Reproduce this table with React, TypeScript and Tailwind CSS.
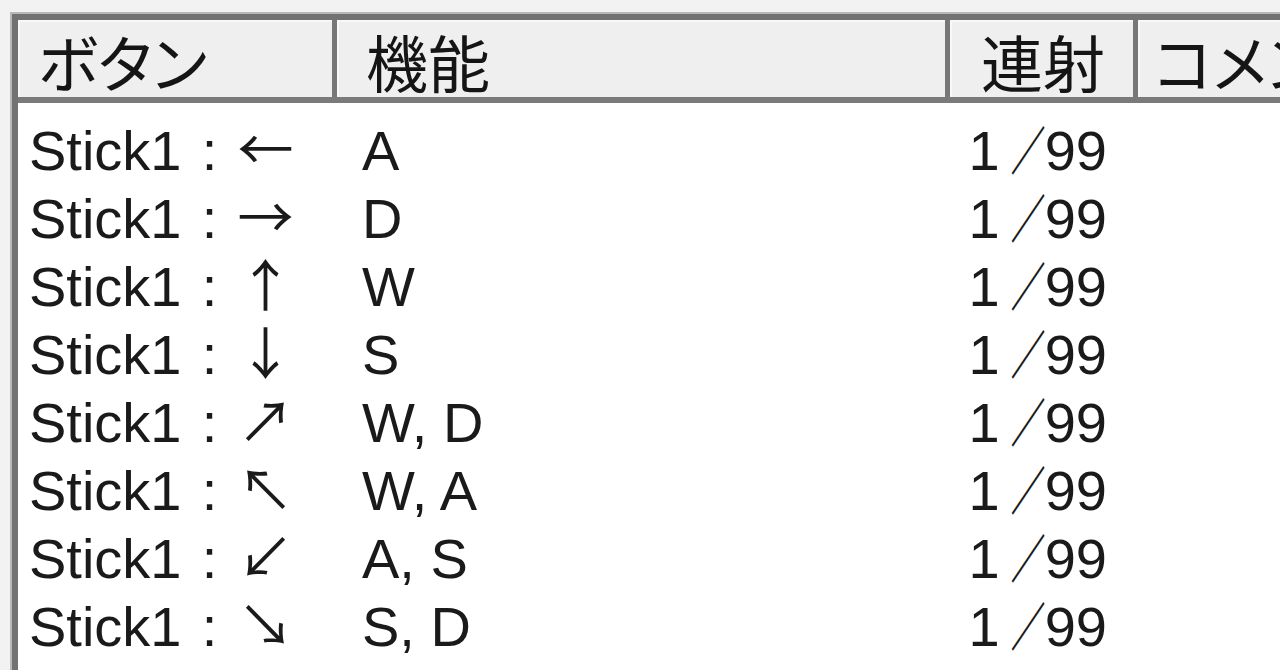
import React from 'react';

const rows = [
  { dir: '←', fn: 'A' },
  { dir: '→', fn: 'D' },
  { dir: '↑', fn: 'W' },
  { dir: '↓', fn: 'S' },
  { dir: '↗', fn: 'W, D' },
  { dir: '↖', fn: 'W, A' },
  { dir: '↙', fn: 'A, S' },
  { dir: '↘', fn: 'S, D' },
];

const latin = "font-['Liberation_Sans','Noto_Sans_CJK_JP',sans-serif]";
const cjk = "font-['Noto_Sans_CJK_JP',sans-serif]";

function HeaderCell({ children, className = '' }: { children?: React.ReactNode; className?: string }) {
  return (
    <div className={`h-full bg-[#efefef] border-l-2 border-t-2 border-[#f8f8f8] flex items-center whitespace-nowrap ${className}`}>
      {children}
    </div>
  );
}

function Sep() {
  return <div className="h-full bg-[#777777]" />;
}

function App() {
  return (
    <div className="w-[1280px] h-[670px] overflow-hidden bg-[#f2f2f2] pt-[12px] pl-[10px]">
      <div className="h-full border-l-2 border-t-2 border-[#b8b8b8]">
        <div className="h-full border-l-[6px] border-t-[6px] border-[#727272] bg-white">
          {/* header */}
          <div
            className={`h-[83px] border-b-[6px] border-[#7a7a7a] grid grid-cols-[314px_5px_608px_5px_183px_5px_1fr] text-[62px] leading-none text-[#151515] ${cjk} [font-feature-settings:'palt']`}
          >
            <HeaderCell className="pl-[18px] pt-[2px]">ボタン</HeaderCell>
            <Sep />
            <HeaderCell className="pl-[27px] pt-[2px]">機能</HeaderCell>
            <Sep />
            <HeaderCell className="justify-end pr-[28px] pt-[2px]">連射</HeaderCell>
            <Sep />
            <HeaderCell className="pl-[14px] pt-[2px] overflow-hidden">コメント</HeaderCell>
          </div>

          {/* body */}
          <div className={`pt-[14px] text-[56px] leading-[68px] text-[#1a1a1a] ${latin}`}>
            {rows.map((r, i) => (
              <div key={i} className="grid grid-cols-[319px_613px_188px_1fr] h-[68px] whitespace-nowrap">
                <div className="pl-[11px]">
                  Stick1
                  <span className="inline-block w-[56px] text-center">:</span>
                  <span className={`${cjk} leading-none`}>{r.dir}</span>
                </div>
                <div className="pl-[25px]">{r.fn}</div>
                <div className="text-right pr-[31px]">
                  1
                  <span className="inline-block w-[45px] text-center">
                    <span className={`${cjk} font-bold leading-none inline-block scale-x-[0.62] scale-y-[0.92] translate-y-[2px]`}>／</span>
                  </span>
                  99
                </div>
                <div />
              </div>
            ))}
          </div>
        </div>
      </div>
    </div>
  );
}

export default App;
